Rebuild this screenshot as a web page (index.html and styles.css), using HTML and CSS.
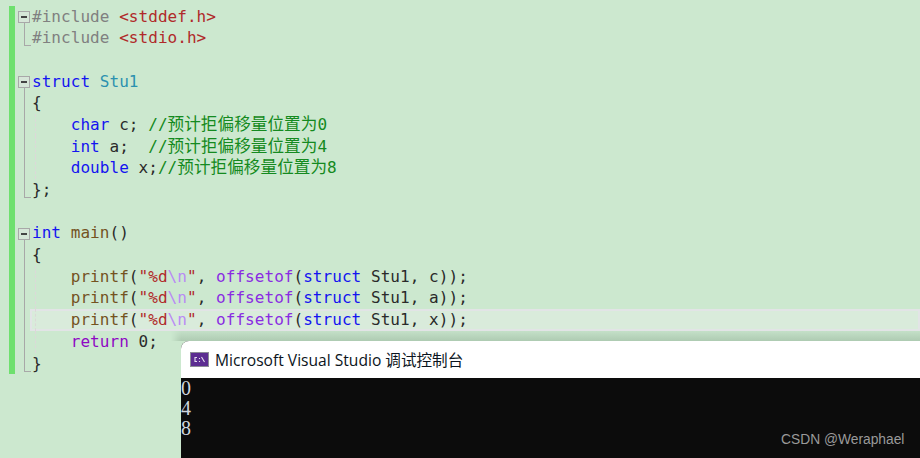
FILE: index.html
```html
<!DOCTYPE html>
<html lang="zh">
<head>
<meta charset="utf-8">
<title>Code</title>
<link rel="stylesheet" href="styles.css">
</head>
<body>
<main class="editor">
<div class="line"><span class="mark"></span><span class="fold open"><i></i></span><code class="code"><span class="pp">#include</span> <span class="str">&lt;stddef.h&gt;</span></code></div>
<div class="line"><span class="mark"></span><span class="fold end"></span><code class="code"><span class="pp">#include</span> <span class="str">&lt;stdio.h&gt;</span></code></div>
<div class="line"><span class="mark"></span><span class="fold"></span><code class="code"></code></div>
<div class="line"><span class="mark"></span><span class="fold open"><i></i></span><code class="code"><span class="kw">struct</span> <span class="type">Stu1</span></code></div>
<div class="line"><span class="mark"></span><span class="fold mid"></span><code class="code">{</code></div>
<div class="line"><span class="mark"></span><span class="fold mid"></span><code class="code guide">    <span class="kw">char</span> c; <span class="cm">//<span class="cjk">预计拒偏移量位置为</span>0</span></code></div>
<div class="line"><span class="mark"></span><span class="fold mid"></span><code class="code guide">    <span class="kw">int</span> a;  <span class="cm">//<span class="cjk">预计拒偏移量位置为</span>4</span></code></div>
<div class="line"><span class="mark"></span><span class="fold mid"></span><code class="code guide">    <span class="kw">double</span> x;<span class="cm">//<span class="cjk">预计拒偏移量位置为</span>8</span></code></div>
<div class="line"><span class="mark"></span><span class="fold end"></span><code class="code">};</code></div>
<div class="line"><span class="mark"></span><span class="fold"></span><code class="code"></code></div>
<div class="line"><span class="mark"></span><span class="fold open"><i></i></span><code class="code"><span class="kw">int</span> <span class="fn">main</span>()</code></div>
<div class="line"><span class="mark"></span><span class="fold mid"></span><code class="code">{</code></div>
<div class="line"><span class="mark"></span><span class="fold mid"></span><code class="code guide">    <span class="fn">printf</span>(<span class="str">"%d<span class="esc">\n</span>"</span>, <span class="macro">offsetof</span>(<span class="kw">struct</span> <span class="plain">Stu1</span>, c));</code></div>
<div class="line"><span class="mark"></span><span class="fold mid"></span><code class="code guide">    <span class="fn">printf</span>(<span class="str">"%d<span class="esc">\n</span>"</span>, <span class="macro">offsetof</span>(<span class="kw">struct</span> <span class="plain">Stu1</span>, a));</code></div>
<div class="line"><span class="mark"></span><span class="fold mid"></span><code class="code guide current">    <span class="fn">printf</span>(<span class="str">"%d<span class="esc">\n</span>"</span>, <span class="macro">offsetof</span>(<span class="kw">struct</span> <span class="plain">Stu1</span>, x));</code></div>
<div class="line"><span class="mark"></span><span class="fold mid"></span><code class="code guide">    <span class="ctl">return</span> 0;</code></div>
<div class="line"><span class="mark"></span><span class="fold end"></span><code class="code">}</code></div>
</main>
<section class="console">
<header class="titlebar">
<svg class="appicon" width="19" height="15" viewBox="0 0 19 15" aria-hidden="true">
<rect width="19" height="15" fill="#8c8c96"/>
<rect x="1" y="1" width="17" height="13" fill="#5c2d91"/>
<path d="M7 5.5H5V9.5H7M9.5 6V7M9.5 9V10M11.5 5L14.5 10" fill="none" stroke="#e6e0ee" stroke-width="1.1"/>
</svg>
<span class="title">Microsoft Visual Studio 调试控制台</span>
</header>
<pre class="output">0
4
8</pre>
</section>
<span class="watermark">CSDN @Weraphael</span>
</body>
</html>
```
FILE: styles.css
```css
* { box-sizing: border-box; }
html, body { margin: 0; height: 100%; }
body {
  position: relative;
  width: 920px;
  height: 458px;
  overflow: hidden;
  background: #cce8cf;
}
.editor { padding: 5.5px 0 0 9px; }
.line {
  display: flex;
  height: 21.7px;
}
.mark {
  flex: none;
  width: 6px;
  background: #6ee06e;
}
.fold {
  flex: none;
  position: relative;
  width: 15px;
}
.fold i {
  position: absolute;
  left: 3px;
  top: 5.5px;
  width: 12px;
  height: 12px;
  border: 1px solid #a8a8a8;
  background: #d6e6d8;
}
.fold i::after {
  content: "";
  position: absolute;
  left: 2px;
  top: 4px;
  width: 6px;
  height: 2px;
  background: #444;
}
.fold.open::after {
  content: "";
  position: absolute;
  left: 9px;
  top: 17.5px;
  bottom: 0;
  width: 1px;
  background: #a8a8a8;
}
.fold.mid::after {
  content: "";
  position: absolute;
  left: 9px;
  top: 0;
  bottom: 0;
  width: 1px;
  background: #a8a8a8;
}
.fold.end::after {
  content: "";
  position: absolute;
  left: 9px;
  top: 0;
  height: 18px;
  width: 6px;
  border-left: 1px solid #a8a8a8;
  border-bottom: 1px solid #a8a8a8;
}
.code {
  flex: 1;
  position: relative;
  padding-left: 2px;
  font-family: "DejaVu Sans Mono", "Noto Sans CJK SC", monospace;
  font-size: 16px;
  letter-spacing: 0.05px;
  line-height: 21.7px;
  color: #2a2a2a;
  white-space: pre;
}
.guide::before {
  content: "";
  position: absolute;
  left: 5px;
  top: 0;
  bottom: 0;
  border-left: 1px dashed #dcd8d8;
}
.current {
  background: #d9ebdb;
  box-shadow: inset 0 0 0 2px #e2e4e6;
}
.pp { color: #808080; }
.str { color: #b02a2a; }
.esc { color: #b98af5; }
.kw { color: #1414f0; }
.type { color: #2b91af; }
.plain { color: #2a2a2a; }
.cm { color: #148a20; }
.cjk { font-size: 16.6px; }
.fn { color: #74531f; }
.macro { color: #8a2be2; }
.ctl { color: #8f08c4; }
.console {
  position: absolute;
  left: 181px;
  top: 341px;
  right: 0;
  bottom: 0;
  border-top-left-radius: 8px;
  background: #0c0c0c;
  overflow: hidden;
}
body::after {
  content: "";
  position: absolute;
  left: 171px;
  right: 0;
  top: 331px;
  height: 10px;
  background: linear-gradient(#c4e0c8, #aecbb2);
  -webkit-mask-image: linear-gradient(90deg, transparent, #000 10px);
  mask-image: linear-gradient(90deg, transparent, #000 10px);
}
.titlebar {
  display: flex;
  align-items: center;
  gap: 6px;
  height: 37px;
  padding: 0 0 1px 9px;
  background: #fff;
}
.appicon { flex: none; }
.title {
  font-family: "Open Sans", "Noto Sans CJK SC", sans-serif;
  font-size: 15.6px;
  color: #0b1420;
}
.output {
  margin: 0;
  font-family: "Liberation Serif", serif;
  font-size: 20px;
  line-height: 20px;
  color: #cfd6de;
}
.watermark {
  position: absolute;
  left: 781px;
  top: 432px;
  font-family: "Liberation Sans", sans-serif;
  font-size: 13.8px;
  color: #9a9a9a;
}
```
